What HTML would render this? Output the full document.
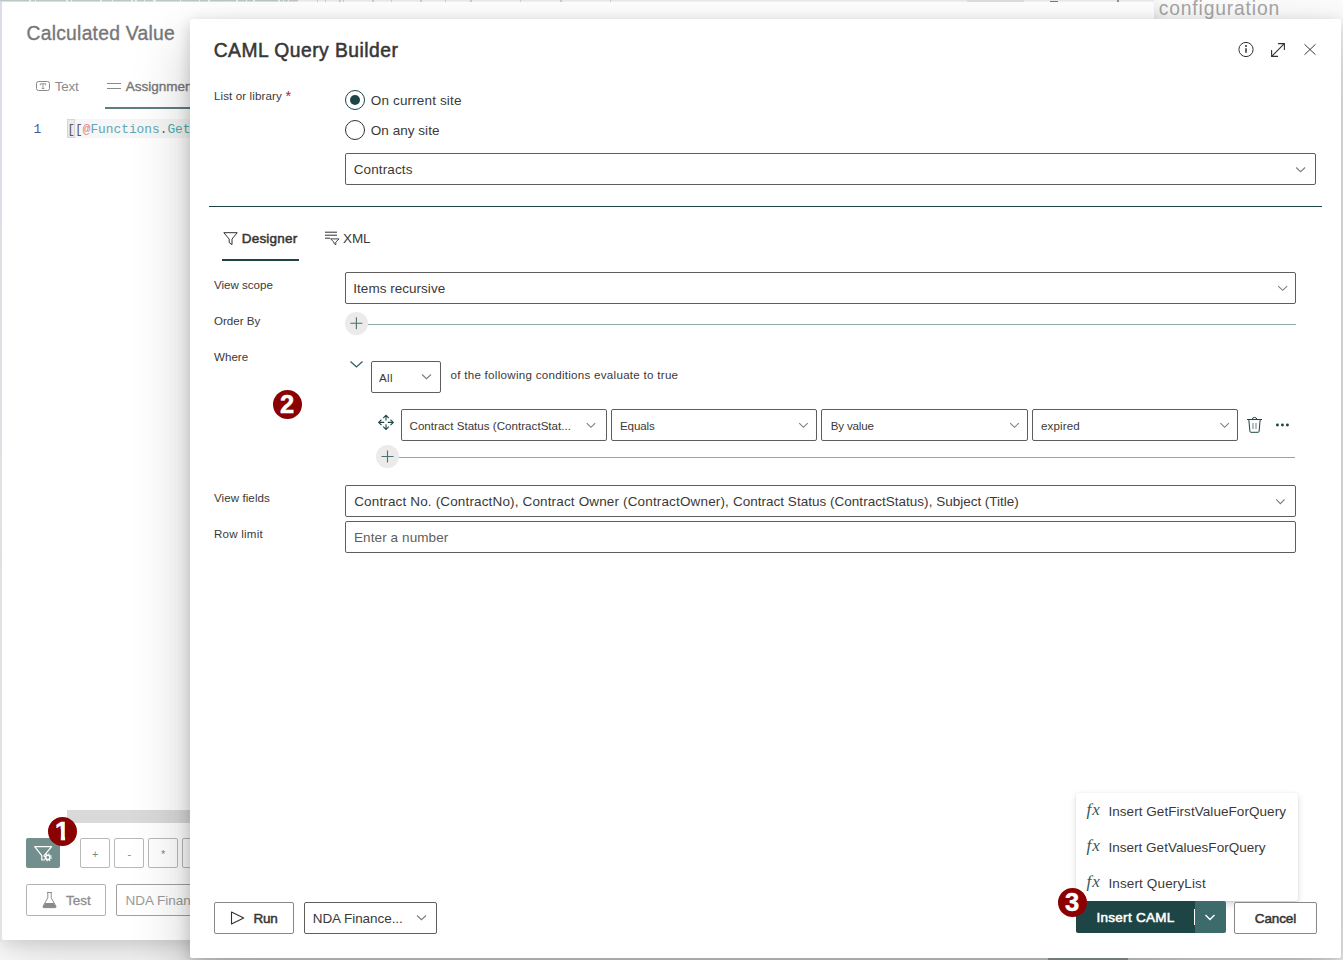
<!DOCTYPE html>
<html><head><meta charset="utf-8"><title>CAML Query Builder</title>
<style>
html,body{margin:0;padding:0}
body{width:1343px;height:960px;position:relative;overflow:hidden;background:#fcfcfc;font-family:"Liberation Sans",sans-serif}
.t{position:absolute;white-space:nowrap;line-height:20px}
.b{position:absolute;box-sizing:border-box}
.dd{position:absolute;box-sizing:border-box;border:1px solid #605e5c;border-radius:2px;background:#fff}
.sb{-webkit-text-stroke:0.35px currentColor}
svg{position:absolute;overflow:visible}
.panel{position:absolute;background:#fff;border-radius:2px;box-shadow:0 25.6px 57.6px rgba(0,0,0,.22),0 4.8px 14.4px rgba(0,0,0,.18)}
</style></head><body>
<div class="panel" id="p1" style="left:2px;top:2px;width:1152px;height:938px;box-shadow:0 25.6px 57.6px rgba(0,0,0,.112),0 4.8px 14.4px rgba(0,0,0,.112)"></div><div class="b" style="left:0;top:0;width:1154px;height:2px;background:linear-gradient(180deg,rgba(255,255,255,0) 0,rgba(255,255,255,0) 1px,rgba(255,255,255,.45) 1px),linear-gradient(90deg,#bcc6c6 0,#bcc6c6 298px,#eaeaea 298px,#eaeaea 100%)"></div><div class="b" style="left:29px;top:0;width:2px;height:2px;background:#e9eded"></div><div class="b" style="left:35px;top:0;width:1px;height:2px;background:#e9eded"></div><div class="b" style="left:66px;top:0;width:2px;height:2px;background:#e9eded"></div><div class="b" style="left:71px;top:0;width:1px;height:2px;background:#e9eded"></div><div class="b" style="left:100px;top:0;width:1.5px;height:2px;background:#e9eded"></div><div class="b" style="left:112px;top:0;width:1px;height:2px;background:#e9eded"></div><div class="b" style="left:131px;top:0;width:1.5px;height:2px;background:#e9eded"></div><div class="b" style="left:135px;top:0;width:1.5px;height:2px;background:#e9eded"></div><div class="b" style="left:144px;top:0;width:1px;height:2px;background:#e9eded"></div><div class="b" style="left:153px;top:0;width:3px;height:2px;background:#e9eded"></div><div class="b" style="left:180px;top:0;width:1px;height:2px;background:#e9eded"></div><div class="b" style="left:199px;top:0;width:1px;height:2px;background:#e9eded"></div><div class="b" style="left:208px;top:0;width:2px;height:2px;background:#e9eded"></div><div class="b" style="left:236px;top:0;width:2px;height:2px;background:#e9eded"></div><div class="b" style="left:246px;top:0;width:1px;height:2px;background:#e9eded"></div><div class="b" style="left:253px;top:0;width:2px;height:2px;background:#e9eded"></div><div class="b" style="left:278px;top:0;width:2px;height:2px;background:#e9eded"></div><div class="b" style="left:283px;top:0;width:1px;height:2px;background:#e9eded"></div><div class="b" style="left:288px;top:0;width:1px;height:2px;background:#e9eded"></div><div class="b" style="left:317px;top:0;width:1px;height:1.5px;background:#c9cccc"></div><div class="b" style="left:325px;top:0;width:1px;height:1.5px;background:#c9cccc"></div><div class="b" style="left:339px;top:0;width:1.5px;height:1.5px;background:#c9cccc"></div><div class="b" style="left:343px;top:0;width:1px;height:1.5px;background:#c9cccc"></div><div class="b" style="left:372px;top:0;width:2px;height:1.5px;background:#c9cccc"></div><div class="b" style="left:391px;top:0;width:1px;height:1.5px;background:#c9cccc"></div><div class="b" style="left:420px;top:0;width:2px;height:1.5px;background:#c9cccc"></div><div class="b" style="left:445px;top:0;width:1px;height:1.5px;background:#c9cccc"></div><div class="b" style="left:470px;top:0;width:1.5px;height:1.5px;background:#c9cccc"></div><div class="b" style="left:520px;top:0;width:1px;height:1.5px;background:#c9cccc"></div><div class="b" style="left:560px;top:0;width:2px;height:1.5px;background:#c9cccc"></div><div class="b" style="left:610px;top:0;width:1px;height:1.5px;background:#c9cccc"></div><div class="b" style="left:967px;top:0;width:57px;height:2px;background:#dedede"></div><div class="b" style="left:1050px;top:1px;width:8px;height:1px;background:#7a7a7a"></div><div class="b" style="left:1117px;top:0;width:2px;height:2px;background:#8f8f9c"></div><div class="b" style="left:0;top:2px;width:2px;height:940px;background:linear-gradient(180deg,#dcdce6,#e4e4e4)"></div><div class="b" style="left:105px;top:107px;width:100px;height:2px;background:#5f7f7f"></div><svg style="left:36px;top:81px" width="14" height="10" viewBox="0 0 14 10"><rect x="0.5" y="0.5" width="13" height="9" rx="2" fill="none" stroke="#8a8a8a"/><path d="M4.3 4.2 V2.8 H9.7 V4.2 M7 2.8 V7.4 M5.8 7.5 H8.2" stroke="#8a8a8a" stroke-width="0.9" fill="none"/></svg><div class="b" style="left:107px;top:83px;width:14px;height:1px;background:#8a8a8a"></div><div class="b" style="left:107px;top:88px;width:14px;height:1px;background:#8a8a8a"></div><div class="b" style="left:67px;top:119px;width:200px;height:19px;background:#f6f6f6"></div><div class="b" style="left:67px;top:119px;width:8px;height:19px;background:#ebebeb;border:1px solid #d6d6d6"></div><div class="b" style="left:67px;top:810px;width:200px;height:13px;background:#d9d9d9"></div><div class="b" style="left:26px;top:838px;width:34px;height:30px;background:#728f8e;border-radius:2px"></div><svg style="left:33px;top:845px" width="20" height="17" viewBox="0 0 20 17"><path d="M1.7 1.6 H18.6 L10.9 10.8 M1.7 1.6 L8.8 10.6 V15 H11.2" fill="none" stroke="#fff" stroke-width="1.2" stroke-linejoin="round" stroke-linecap="round"/><circle cx="14.8" cy="12.4" r="2.1" fill="#728f8e" stroke="#fff" stroke-width="1.5"/><circle cx="14.8" cy="12.4" r="3.4" fill="none" stroke="#fff" stroke-width="1.3" stroke-dasharray="1.34 1.33"/></svg><div class="b" style="left:80px;top:838px;width:30px;height:30px;border:1px solid #b9b9b9;border-radius:2px;background:#fff"></div><div class="b" style="left:114px;top:838px;width:30px;height:30px;border:1px solid #b9b9b9;border-radius:2px;background:#fff"></div><div class="b" style="left:148px;top:838px;width:30px;height:30px;border:1px solid #b9b9b9;border-radius:2px;background:#fff"></div><div class="b" style="left:182px;top:838px;width:30px;height:30px;border:1px solid #b9b9b9;border-radius:2px;background:#fff"></div><div class="b" style="left:26px;top:884px;width:80px;height:32px;border:1px solid #b3b3b3;border-radius:2px;background:#fff"></div><div class="b" style="left:116px;top:884px;width:140px;height:32px;border:1px solid #a0a0a0;border-radius:2px;background:#fff"></div><svg style="left:42px;top:892px" width="15" height="16.3" viewBox="0 0 15 17" preserveAspectRatio="none"><path d="M5 0.5 H10 M5.8 0.5 V6 L1 15 Q0.7 16.3 2 16.3 H13 Q14.3 16.3 14 15 L9.2 6 V0.5" fill="none" stroke="#8a8a8a" stroke-width="1"/><path d="M3.2 11.5 H11.8 L14 15.6 Q14.1 16.3 13 16.3 H2 Q0.9 16.3 1 15.6 Z" fill="#8a8a8a"/></svg><div class="b" style="left:47.8px;top:816.7px;width:29.6px;height:29.6px;border-radius:50%;background:#8b0000"></div><span class="t" id="t0" style="left:1158.75px;top:-0.89px;font-size:19.3px;color:#a6a6a6;letter-spacing:0.838px;">configuration</span>
<span class="t" id="t1" style="left:26.50px;top:24.11px;font-size:19.3px;color:#777777;letter-spacing:0.259px;-webkit-text-stroke:0.35px #777;">Calculated Value</span>
<span class="t" id="t2" style="left:54.80px;top:77.12px;font-size:13.51px;color:#8c8c8c;letter-spacing:-0.266px;">Text</span>
<span class="t" id="t3" style="left:125.80px;top:77.12px;font-size:13.51px;color:#777777;-webkit-text-stroke:0.35px #777;">Assignment</span>
<span class="t" id="t4" style="left:33.50px;top:120.36px;font-size:12.8px;color:#4a55a0;font-family:'Liberation Mono', monospace;letter-spacing:0.013px;">1</span>
<span class="t" id="t5" style="left:67.20px;top:120.36px;font-size:12.8px;color:#5a5a5a;font-family:'Liberation Mono', monospace;letter-spacing:0.020px;">[[</span>
<span class="t" id="t6" style="left:82.80px;top:120.36px;font-size:12.8px;color:#e58080;font-family:'Liberation Mono', monospace;letter-spacing:0.013px;">@</span>
<span class="t" id="t7" style="left:90.40px;top:120.36px;font-size:12.8px;color:#5ea7b8;font-family:'Liberation Mono', monospace;letter-spacing:0.019px;">Functions</span>
<span class="t" id="t8" style="left:159.70px;top:120.36px;font-size:12.8px;color:#5a5a5a;font-family:'Liberation Mono', monospace;letter-spacing:0.013px;">.</span>
<span class="t" id="t9" style="left:167.40px;top:120.36px;font-size:12.8px;color:#4fadaa;font-family:'Liberation Mono', monospace;letter-spacing:0.020px;">GetValuesForQuery</span>
<span class="t" id="t10" style="left:92.00px;top:844.19px;font-size:11px;color:#6f8e8d;">+</span>
<span class="t" id="t11" style="left:127.50px;top:844.19px;font-size:11px;color:#6f8e8d;">-</span>
<span class="t" id="t12" style="left:161.00px;top:844.19px;font-size:11px;color:#6f8e8d;">*</span>
<span class="t" id="t13" style="left:66.00px;top:890.92px;font-size:13.51px;color:#8c8c8c;letter-spacing:-0.041px;-webkit-text-stroke:0.3px #8c8c8c;">Test</span>
<span class="t" id="t14" style="left:125.60px;top:890.72px;font-size:13.51px;color:#9a9a9a;">NDA Finance</span>
<span class="t" id="t15" style="left:55.00px;top:820.86px;font-size:25.5px;color:#fff;font-weight:700;-webkit-text-stroke:0.5px #fff;clip-path:polygon(0 -3px,10.1px -3px,10.1px 23px,5.8px 23px,5.8px 8px,0 8px);">1</span><div class="panel" id="p2" style="left:190px;top:19px;width:1151px;height:939px"></div><div class="b" style="left:1048px;top:958px;width:80px;height:2px;background:#707b7b"></div><svg style="left:1238px;top:41px" width="16" height="16" viewBox="0 0 16 16"><g transform="translate(0.0 0.5)"><circle cx="8" cy="8" r="7.1" fill="none" stroke="#323130"/><path d="M8 6.8 V11.3" stroke="#323130" stroke-width="1.5"/><circle cx="8" cy="4.6" r="1" fill="#323130"/></g></svg><svg style="left:1271px;top:43px" width="14" height="14" viewBox="0 0 14 14"><path d="M0.7 13.3 L13.3 0.7 M7 0.6 H13.4 V7 M0.6 7 V13.4 H7" fill="none" stroke="#323130" stroke-width="1.1"/></svg><svg style="left:1304px;top:44px" width="12" height="11" viewBox="0 0 12 11"><path d="M0.5 0.3 L11.5 10.7 M11.5 0.3 L0.5 10.7" fill="none" stroke="#3b3a39" stroke-width="1"/></svg><div class="b" style="left:345px;top:90px;width:20px;height:20px;border:1px solid #1e4545;border-radius:50%"></div><div class="b" style="left:350px;top:95px;width:10px;height:10px;background:#1e4545;border-radius:50%"></div><div class="b" style="left:345px;top:120px;width:20px;height:20px;border:1px solid #323130;border-radius:50%"></div><div class="dd" style="left:345px;top:153px;width:971px;height:32px"></div><svg style="left:1295px;top:167px" width="10" height="5.7" viewBox="0 0 10 5.7"><g transform="translate(0.6 0.0)"><path d="M0.5 0.5 L5.0 4.7 L9.5 0.5" fill="none" stroke="#7c7a78" stroke-width="1.05"/></g></svg><div class="b" style="left:209px;top:206px;width:1113px;height:1px;background:#1e4545"></div><svg style="left:223px;top:231px" width="15" height="15" viewBox="0 0 15 15"><g transform="translate(0.0 0.7)"><path d="M0.8 1 H14.2 L9 7.4 V12.9 L6.2 10.9 V7.4 Z" fill="none" stroke="#323130" stroke-width="1" stroke-linejoin="round"/></g></svg><div class="b" style="left:222px;top:259px;width:77px;height:2px;background:#1e4545"></div><svg style="left:325px;top:230px" width="15" height="15" viewBox="0 0 15 15"><g transform="translate(0.0 0.7)"><path d="M0 1.5 H12 M0 4.5 H12 M0 7.5 H5" stroke="#323130" fill="none"/><path d="M5.6 8.2 H14 L10.8 11.4 V14 L8.9 12.7 V11.4 Z" fill="none" stroke="#323130" stroke-width="0.9" stroke-linejoin="round"/></g></svg><div class="dd" style="left:345px;top:272px;width:951px;height:32px"></div><svg style="left:1277px;top:285px" width="10" height="5.7" viewBox="0 0 10 5.7"><g transform="translate(0.7 0.6)"><path d="M0.5 0.5 L5.0 4.7 L9.5 0.5" fill="none" stroke="#7c7a78" stroke-width="1.05"/></g></svg><div class="b" style="left:368px;top:324px;width:928px;height:1px;background:#8fa7a7"></div><div class="b" style="left:344.9px;top:311.8px;width:23px;height:23px;border-radius:50%;background:#edebe9"></div><svg style="left:350px;top:317px" width="12" height="12" viewBox="0 0 12 12"><g transform="translate(0.4 0.3)"><path d="M6 0 V12 M0 6 H12" stroke="#477272" stroke-width="1.1" fill="none"/></g></svg><svg style="left:350px;top:361px" width="13" height="7" viewBox="0 0 13 7"><path d="M0.5 0.5 L6.5 6 L12.5 0.5" fill="none" stroke="#2f5c5c" stroke-width="1.2"/></svg><div class="dd" style="left:371px;top:361px;width:70px;height:32px"></div><svg style="left:421px;top:374px" width="10" height="5.7" viewBox="0 0 10 5.7"><g transform="translate(0.5 0.0)"><path d="M0.5 0.5 L5.0 4.7 L9.5 0.5" fill="none" stroke="#7c7a78" stroke-width="1.05"/></g></svg><div class="dd" style="left:401px;top:409px;width:205.60000000000002px;height:32px"></div><svg style="left:586px;top:422px" width="9.5" height="5.7" viewBox="0 0 9.5 5.7"><g transform="translate(0.2 0.7)"><path d="M0.5 0.5 L4.75 4.7 L9.0 0.5" fill="none" stroke="#7c7a78" stroke-width="1.05"/></g></svg><div class="dd" style="left:611px;top:409px;width:205.5px;height:32px"></div><svg style="left:798px;top:422px" width="9.5" height="5.7" viewBox="0 0 9.5 5.7"><g transform="translate(0.7 0.7)"><path d="M0.5 0.5 L4.75 4.7 L9.0 0.5" fill="none" stroke="#7c7a78" stroke-width="1.05"/></g></svg><div class="dd" style="left:821px;top:409px;width:206.5px;height:32px"></div><svg style="left:1009px;top:422px" width="9.5" height="5.7" viewBox="0 0 9.5 5.7"><g transform="translate(0.7 0.7)"><path d="M0.5 0.5 L4.75 4.7 L9.0 0.5" fill="none" stroke="#7c7a78" stroke-width="1.05"/></g></svg><div class="dd" style="left:1032px;top:409px;width:205.5px;height:32px"></div><svg style="left:1219px;top:422px" width="9.5" height="5.7" viewBox="0 0 9.5 5.7"><g transform="translate(0.9 0.7)"><path d="M0.5 0.5 L4.75 4.7 L9.0 0.5" fill="none" stroke="#7c7a78" stroke-width="1.05"/></g></svg><svg style="left:378px;top:415px" width="16" height="15" viewBox="0 0 16 15"><path d="M0.7 7.4 H6.2 M9.8 7.4 H15.3 M8 1.2 V5.6 M8 9.2 V13.6 M3.5 4.6 L0.7 7.4 L3.5 10.2 M12.5 4.6 L15.3 7.4 L12.5 10.2 M5.2 3.2 L8 0.4 L10.8 3.2 M5.2 11.6 L8 14.4 L10.8 11.6" fill="none" stroke="#1e4545" stroke-width="1.1"/></svg><svg style="left:1247px;top:417px" width="15" height="17" viewBox="0 0 15 17"><path d="M0 2.5 H15 M5.2 2.3 Q5.4 0.4 7.5 0.4 Q9.6 0.4 9.8 2.3 M1.8 2.5 L2.9 14.4 Q3 15.3 4 15.3 H11 Q12 15.3 12.1 14.4 L13.2 2.5" fill="none" stroke="#1e4545" stroke-width="1"/><path d="M6 6.1 V11.9 M9 6.1 V11.9" fill="none" stroke="#1e4545" stroke-width="1.1" opacity="0.6"/></svg><svg style="left:1275px;top:422px" width="15" height="6" viewBox="0 0 15 6"><circle cx="2.4" cy="3" r="1.45" fill="#1e4545"/><circle cx="7.4" cy="3" r="1.45" fill="#1e4545"/><circle cx="12.4" cy="3" r="1.45" fill="#1e4545"/></svg><div class="b" style="left:399px;top:457px;width:896px;height:1px;background:#8fa7a7"></div><div class="b" style="left:376.0px;top:445.0px;width:23px;height:23px;border-radius:50%;background:#edebe9"></div><svg style="left:381px;top:450px" width="12" height="12" viewBox="0 0 12 12"><g transform="translate(0.5 0.5)"><path d="M6 0 V12 M0 6 H12" stroke="#477272" stroke-width="1.1" fill="none"/></g></svg><div class="dd" style="left:345px;top:485px;width:951px;height:32px"></div><svg style="left:1275px;top:498px" width="9.4" height="5.8" viewBox="0 0 9.4 5.8"><g transform="translate(0.7 0.9)"><path d="M0.5 0.5 L4.7 4.8 L8.9 0.5" fill="none" stroke="#7c7a78" stroke-width="1.05"/></g></svg><div class="dd" style="left:345px;top:521px;width:951px;height:32px"></div><div class="dd" style="left:214px;top:902px;width:80px;height:32px;border-color:#8a8886"></div><svg style="left:230px;top:911px" width="14" height="13.5" viewBox="0 0 14 13.5"><g transform="translate(0.7 0.2)"><path d="M0.8 0.8 L13 6.75 L0.8 12.7 Z" fill="none" stroke="#323130" stroke-width="1.1" stroke-linejoin="round"/></g></svg><div class="dd" style="left:304px;top:902px;width:133px;height:32px"></div><svg style="left:416px;top:915px" width="10" height="5.7" viewBox="0 0 10 5.7"><g transform="translate(0.5 0.0)"><path d="M0.5 0.5 L5.0 4.7 L9.5 0.5" fill="none" stroke="#7c7a78" stroke-width="1.05"/></g></svg><div class="b" style="left:1076px;top:793px;width:222px;height:108px;background:#fff;border-radius:2px;box-shadow:0 3.2px 7.2px rgba(0,0,0,.13),0 0.6px 1.8px rgba(0,0,0,.11)"></div><div class="b" style="left:1076px;top:901px;width:120px;height:32px;background:#1e4545;border-radius:2px 0 0 2px"></div><div class="b" style="left:1195px;top:901px;width:31px;height:32px;background:#3d6b6b;border-radius:0 2px 2px 0"></div><div class="b" style="left:1194px;top:909px;width:1px;height:16px;background:#fff"></div><svg style="left:1205px;top:914px" width="10" height="6" viewBox="0 0 10 6"><g transform="translate(0.0 0.5)"><path d="M0.5 0.5 L5.0 5 L9.5 0.5" fill="none" stroke="#fff" stroke-width="1.4"/></g></svg><div class="dd" style="left:1234px;top:902px;width:83px;height:32px;border-color:#8a8886"></div><div class="b" style="left:272.8px;top:389.59999999999997px;width:29.6px;height:29.6px;border-radius:50%;background:#8b0000"></div><div class="b" style="left:1057.9px;top:887.6px;width:29.6px;height:29.6px;border-radius:50%;background:#8b0000"></div><span class="t" id="t16" style="left:213.70px;top:41.11px;font-size:19.3px;color:#3a3938;letter-spacing:0.473px;-webkit-text-stroke:0.5px #323130;">CAML Query Builder</span>
<span class="t" id="t17" style="left:213.90px;top:86.39px;font-size:11.58px;color:#3a3938;letter-spacing:0.115px;">List or library</span>
<span class="t" id="t18" style="left:285.40px;top:86.38px;font-size:14.5px;color:#a4262c;">*</span>
<span class="t" id="t19" style="left:370.80px;top:91.32px;font-size:13.51px;color:#3a3938;letter-spacing:0.150px;">On current site</span>
<span class="t" id="t20" style="left:370.80px;top:120.92px;font-size:13.51px;color:#3a3938;letter-spacing:0.037px;">On any site</span>
<span class="t" id="t21" style="left:353.70px;top:160.02px;font-size:13.51px;color:#3a3938;letter-spacing:0.124px;">Contracts</span>
<span class="t" id="t22" style="left:241.70px;top:229.32px;font-size:13.51px;color:#3a3938;letter-spacing:0.221px;-webkit-text-stroke:0.5px #323130;">Designer</span>
<span class="t" id="t23" style="left:343.00px;top:229.32px;font-size:13.51px;color:#3a3938;letter-spacing:-0.089px;">XML</span>
<span class="t" id="t24" style="left:214.00px;top:274.69px;font-size:11.58px;color:#3a3938;letter-spacing:-0.010px;">View scope</span>
<span class="t" id="t25" style="left:353.30px;top:279.32px;font-size:13.51px;color:#3a3938;letter-spacing:0.025px;">Items recursive</span>
<span class="t" id="t26" style="left:214.00px;top:310.79px;font-size:11.58px;color:#3a3938;letter-spacing:-0.004px;">Order By</span>
<span class="t" id="t27" style="left:214.00px;top:347.19px;font-size:11.58px;color:#3a3938;letter-spacing:0.018px;">Where</span>
<span class="t" id="t28" style="left:379.00px;top:368.49px;font-size:11.58px;color:#3a3938;letter-spacing:0.375px;">All</span>
<span class="t" id="t29" style="left:450.50px;top:364.74px;font-size:11.58px;color:#3a3938;letter-spacing:0.277px;">of the following conditions evaluate to true</span>
<span class="t" id="t30" style="left:409.50px;top:415.89px;font-size:11.58px;color:#3a3938;letter-spacing:0.020px;">Contract Status (ContractStat...</span>
<span class="t" id="t31" style="left:620.00px;top:415.89px;font-size:11.58px;color:#3a3938;letter-spacing:-0.134px;">Equals</span>
<span class="t" id="t32" style="left:830.70px;top:415.89px;font-size:11.58px;color:#3a3938;letter-spacing:-0.178px;">By value</span>
<span class="t" id="t33" style="left:1041.00px;top:415.89px;font-size:11.58px;color:#3a3938;letter-spacing:0.117px;">expired</span>
<span class="t" id="t34" style="left:214.00px;top:488.39px;font-size:11.58px;color:#3a3938;letter-spacing:0.069px;">View fields</span>
<span class="t" id="t35" style="left:354.20px;top:492.32px;font-size:13.51px;color:#3a3938;letter-spacing:0.148px;white-space:pre;">Contract No. (ContractNo), </span>
<span class="t" id="t36" style="left:522.50px;top:492.32px;font-size:13.51px;color:#3a3938;letter-spacing:0.151px;white-space:pre;">Contract Owner (ContractOwner), </span>
<span class="t" id="t37" style="left:732.90px;top:492.32px;font-size:13.51px;color:#3a3938;letter-spacing:0.021px;white-space:pre;">Contract Status (ContractStatus), </span>
<span class="t" id="t38" style="left:936.20px;top:492.32px;font-size:13.51px;color:#3a3938;letter-spacing:-0.012px;">Subject (Title)</span>
<span class="t" id="t39" style="left:214.00px;top:524.29px;font-size:11.58px;color:#3a3938;letter-spacing:0.215px;">Row limit</span>
<span class="t" id="t40" style="left:354.00px;top:527.62px;font-size:13.51px;color:#605e5c;letter-spacing:0.096px;">Enter a number</span>
<span class="t" id="t41" style="left:253.40px;top:909.32px;font-size:13.51px;color:#3a3938;letter-spacing:-0.155px;-webkit-text-stroke:0.5px #323130;">Run</span>
<span class="t" id="t42" style="left:312.70px;top:909.32px;font-size:13.51px;color:#3a3938;letter-spacing:-0.050px;">NDA Finance...</span>
<span class="t" id="t43" style="left:1086.60px;top:799.71px;font-size:17px;color:#2f5a5a;font-family:'Liberation Serif', serif;letter-spacing:0.859px;font-style:italic;">fx</span>
<span class="t" id="t44" style="left:1108.40px;top:802.32px;font-size:13.51px;color:#3a3938;letter-spacing:0.055px;">Insert GetFirstValueForQuery</span>
<span class="t" id="t45" style="left:1086.60px;top:835.71px;font-size:17px;color:#2f5a5a;font-family:'Liberation Serif', serif;letter-spacing:0.859px;font-style:italic;">fx</span>
<span class="t" id="t46" style="left:1108.40px;top:838.32px;font-size:13.51px;color:#3a3938;letter-spacing:0.027px;">Insert GetValuesForQuery</span>
<span class="t" id="t47" style="left:1086.60px;top:871.71px;font-size:17px;color:#2f5a5a;font-family:'Liberation Serif', serif;letter-spacing:0.859px;font-style:italic;">fx</span>
<span class="t" id="t48" style="left:1108.40px;top:874.32px;font-size:13.51px;color:#3a3938;letter-spacing:0.138px;">Insert QueryList</span>
<span class="t" id="t49" style="left:1096.40px;top:908.32px;font-size:13.51px;color:#fff;letter-spacing:0.297px;-webkit-text-stroke:0.55px #fff;">Insert CAML</span>
<span class="t" id="t50" style="left:1254.80px;top:909.12px;font-size:13.51px;color:#3a3938;letter-spacing:-0.139px;-webkit-text-stroke:0.5px #323130;">Cancel</span>
<span class="t" id="t51" style="left:279.90px;top:393.76px;font-size:25.5px;color:#fff;font-weight:700;-webkit-text-stroke:0.5px #fff;">2</span>
<span class="t" id="t52" style="left:1065.00px;top:891.66px;font-size:25.5px;color:#fff;font-weight:700;-webkit-text-stroke:0.5px #fff;">3</span>
</body></html>
